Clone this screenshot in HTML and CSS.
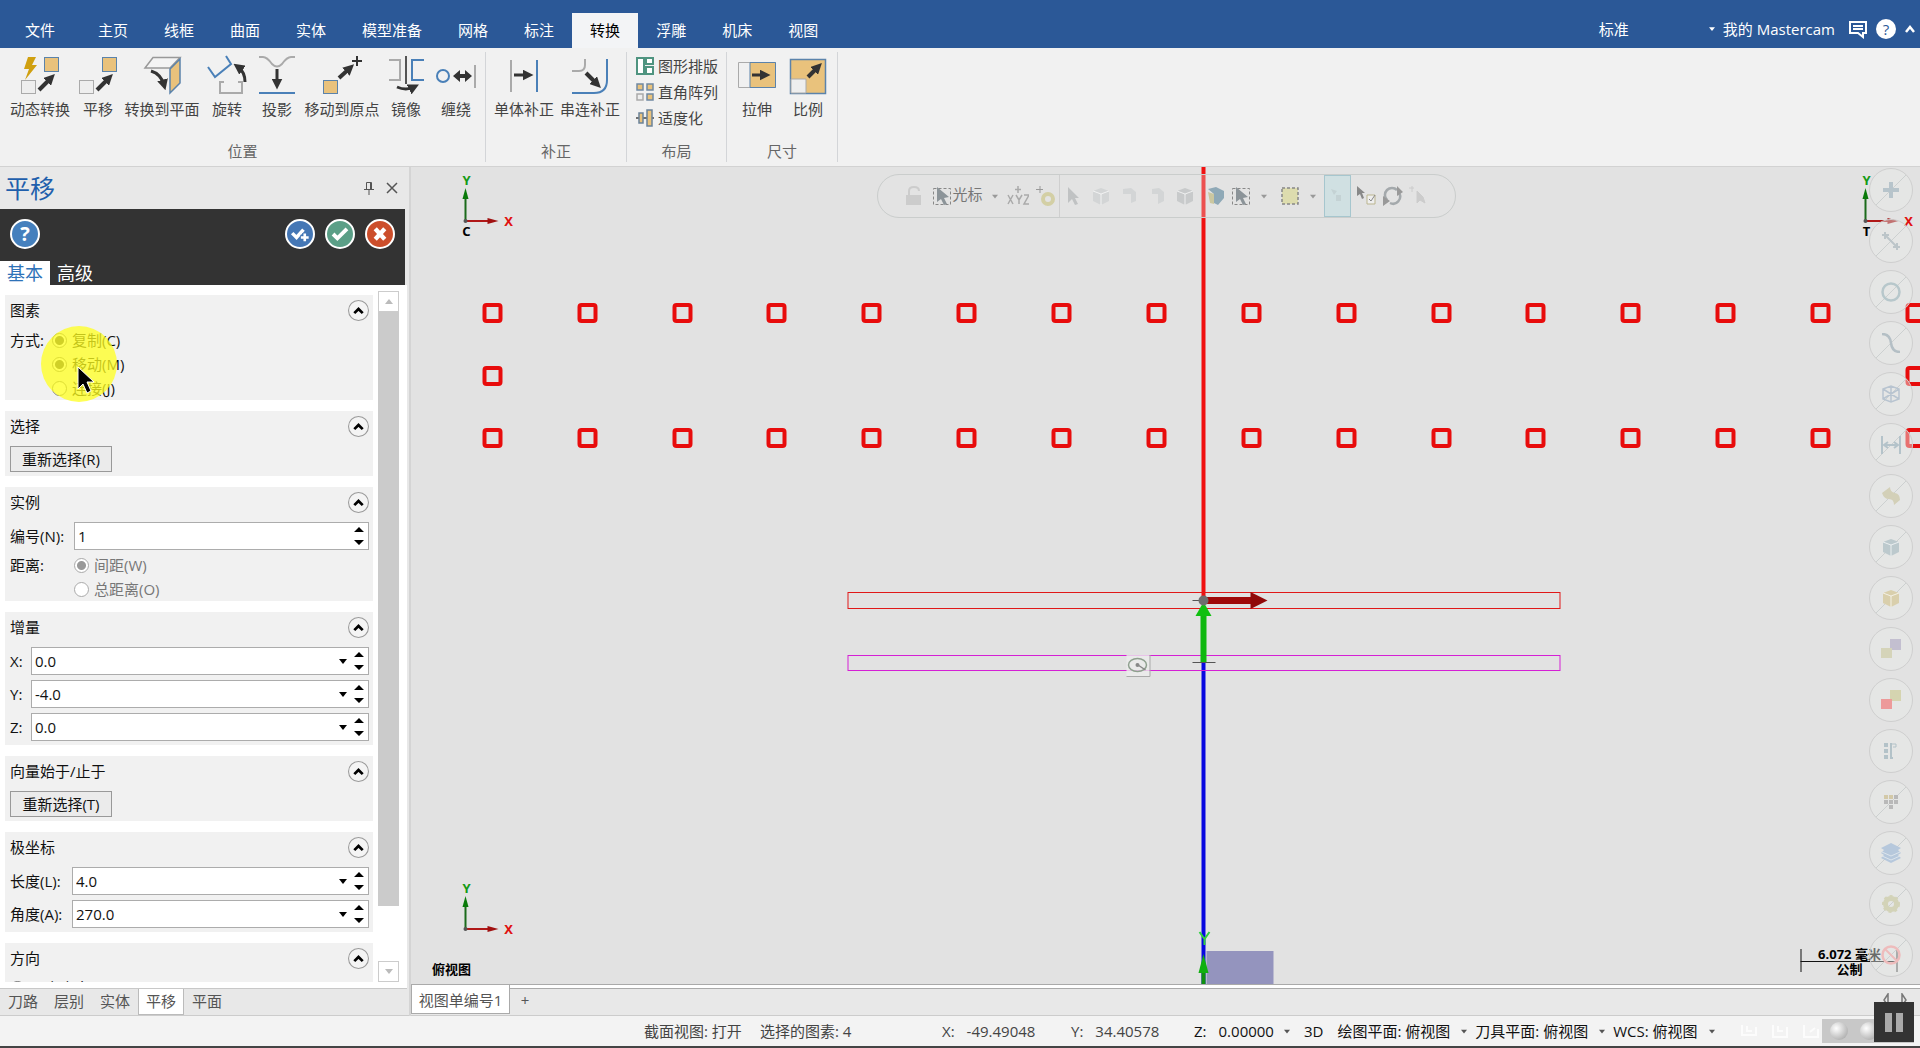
FILE: index.html
```html
<!DOCTYPE html>
<html lang="zh-CN">
<head>
<meta charset="utf-8">
<title>Mastercam</title>
<link rel="stylesheet" href="styles.css">
</head>
<body>
<svg class="defs" aria-hidden="true">
  <defs>
    <marker id="head" viewBox="0 0 10 10" refX="5" refY="5" markerWidth="11" markerHeight="11" markerUnits="userSpaceOnUse" orient="auto-start-reverse"><path d="M0 0L10 5L0 10z" fill="#333"/></marker>
    <symbol id="up" viewBox="0 0 20 20"><circle cx="10" cy="10" r="9.500" fill="#f4f4f4" stroke="#9a9a9a"/><path d="M6 12.500l4-4 4 4" fill="none" stroke="#000" stroke-width="2.600"/></symbol>
    <symbol id="spin" viewBox="0 0 10 18"><path d="M0 5L5 0L10 5zM0 13L5 18L10 13z"/></symbol>
    <symbol id="caret" viewBox="0 0 8 5"><path d="M0 0H8L4 5z"/></symbol>
    <symbol id="pick" viewBox="0 0 20 20"><rect x="1.500" y="2.500" width="17" height="16" fill="none" stroke="#888" stroke-dasharray="3 2"/><path d="M5 1v15l4-3 3 6 3-1-3-6 5-1z" fill="#8c9499"/></symbol>
    <symbol id="cube" viewBox="0 0 20 20"><path d="M2 5l8-3 8 3v10l-8 4-8-4z"/><path d="M2 5l8 3 8-3M10 8v11" fill="none" stroke="#fff" stroke-opacity=".7"/></symbol>
  </defs>
</svg>

<div class="app">
  <header class="titlebar">
    <nav class="tabs">
      <button class="tab file">文件</button><button class="tab">主页</button><button class="tab">线框</button><button class="tab">曲面</button><button class="tab">实体</button><button class="tab">模型准备</button><button class="tab">网格</button><button class="tab">标注</button><button class="tab active">转换</button><button class="tab">浮雕</button><button class="tab">机床</button><button class="tab">视图</button>
    </nav>
    <div class="account">
      <button class="plain std">标准</button>
      <svg class="caret" width="6" height="4"><use href="#caret"/></svg>
      <button class="plain mine">我的 Mastercam</button>
      <svg width="20" height="20" viewBox="0 0 20 20" fill="none" stroke="#fff" stroke-width="2"><path d="M2 3h16v11h-3v4l-5-4H2z"/><path d="M5 7h10M5 10h10"/></svg>
      <button class="help" aria-label="帮助">?</button>
      <svg width="10" height="8" viewBox="0 0 10 8" fill="none" stroke="#fff" stroke-width="2.500"><path d="M1 7l4-5 4 5"/></svg>
    </div>
  </header>

  <section class="ribbon">
    <div class="group">
      <div class="tools position">
        <button class="tool"><svg viewBox="0 0 40 40"><path d="M8 2h8l-4 8h5L5 25l4-11H4z" fill="#d0a010"/><rect x="24.500" y="2.500" width="14" height="14" fill="#e9c27c" stroke="#5b83ab"/><rect x="1.500" y="25.500" width="14" height="13" fill="#eee" stroke="#aaa"/><path d="M19 35L31 23" stroke="#333" stroke-width="4" marker-end="url(#head)"/></svg>动态转换</button>
        <button class="tool"><svg viewBox="0 0 40 40"><rect x="24.500" y="2.500" width="14" height="14" fill="#e9c27c" stroke="#5b83ab"/><rect x="1.500" y="25.500" width="14" height="13" fill="#eee" stroke="#aaa"/><path d="M19 35L31 23" stroke="#333" stroke-width="4" marker-end="url(#head)"/></svg>平移</button>
        <button class="tool"><svg viewBox="0 0 40 40"><path d="M3 13L11 2.500H38L28 13z" fill="#f4f4f4" stroke="#999" stroke-width="1.500"/><path d="M28 14L38 4V28L28 38z" fill="#e9c27c" stroke="#5b83ab" stroke-width="1.500"/><path d="M9 16q10 3 13 14" fill="none" stroke="#333" stroke-width="3" marker-end="url(#head)"/></svg>转换到平面</button>
        <button class="tool"><svg viewBox="0 0 40 40" fill="none" stroke-width="2"><path d="M1 12L8 22L24 9L19 1" stroke="#4a80b8"/><path d="M17 27H13V38H35V27H31" stroke="#aaa"/><path d="M38 27Q38 17 31 12" stroke="#333" stroke-width="3" marker-end="url(#head)"/></svg>旋转</button>
        <button class="tool"><svg viewBox="0 0 40 40" fill="none" stroke-width="2"><path d="M2 2h4q4 0 9 7q5 5 10 0q5-7 9-7h4" stroke="#aaa"/><path d="M20 14V29" stroke="#333" stroke-width="3" marker-end="url(#head)"/><path d="M2 38H38" stroke="#4a80b8"/></svg>投影</button>
        <button class="tool"><svg viewBox="0 0 40 40"><rect x="1.500" y="25.500" width="14" height="13" fill="#e9c27c" stroke="#5b83ab"/><path d="M17 23L28 13" stroke="#333" stroke-width="4" marker-end="url(#head)"/><path d="M35 1V11M30 6H40" stroke="#333" stroke-width="2"/></svg>移动到原点</button>
        <button class="tool"><svg viewBox="0 0 40 40" fill="none" stroke-width="2"><path d="M3 5H14V25H3" stroke="#aaa"/><path d="M20 1V29" stroke="#555"/><path d="M38 5H26V25H38" stroke="#4a80b8"/><path d="M11 32q9 4 17 0" stroke="#333" stroke-width="3" marker-end="url(#head)"/></svg>镜像</button>
        <button class="tool"><svg viewBox="0 0 40 40" fill="none" stroke-width="2"><circle cx="7" cy="21" r="6" stroke="#4a80b8"/><path d="M17 21l7-6v4h5v-4l7 6-7 6v-4h-5v4z" fill="#333" stroke="none"/><path d="M39 10V33" stroke="#aaa"/></svg>缠绕</button>
      </div>
      <div class="caption">位置</div>
    </div>
    <div class="group">
      <div class="tools offset">
        <button class="tool"><svg viewBox="0 0 40 40" fill="none" stroke-width="2"><path d="M7 5V37" stroke="#aaa"/><path d="M10 20H24" stroke="#333" stroke-width="3" marker-end="url(#head)"/><path d="M33 5V37" stroke="#4a80b8"/></svg>单体补正</button>
        <button class="tool"><svg viewBox="0 0 40 40" fill="none" stroke-width="2"><path d="M15 4V10Q15 16 9 16H2" stroke="#aaa"/><path d="M16 18L27 29" stroke="#333" stroke-width="4" marker-end="url(#head)"/><path d="M37 4V25Q37 38 24 38H2" stroke="#4a80b8"/></svg>串连补正</button>
      </div>
      <div class="caption">补正</div>
    </div>
    <div class="group">
      <div class="tools stack">
        <button class="mini"><svg viewBox="0 0 18 18" fill="#fff" stroke="#4f9480" stroke-width="2"><path d="M1 1H8V17H1zM10 1H17V7H10zM10 10H17V17H10z"/></svg>图形排版</button>
        <button class="mini"><svg viewBox="0 0 18 18" fill="#e9c27c" stroke="#7089a3" stroke-width="1.500"><path d="M1 1h6v6H1zM11 1h6v6h-6zM11 11h6v6h-6z"/><path fill="#eee" stroke="#aaa" d="M1 11h6v6H1z"/></svg>直角阵列</button>
        <button class="mini"><svg viewBox="0 0 18 18" fill="#e9c27c" stroke="#6b8299" stroke-width="1.500"><path d="M0 9H18" stroke="#444"/><path d="M3 4h4v10H3zM11 1h5v16h-5z"/></svg>适度化</button>
      </div>
      <div class="caption">布局</div>
    </div>
    <div class="group">
      <div class="tools size">
        <button class="tool"><svg viewBox="0 0 40 40"><path d="M1.500 7.500h37v25h-37z" fill="#f0f0f0" stroke="#aaa"/><path d="M13 7.500h25.500v25H13z" fill="#e9c27c" stroke="#5b83ab"/><path d="M15 20H28" stroke="#333" stroke-width="3" marker-end="url(#head)"/></svg>拉伸</button>
        <button class="tool"><svg viewBox="0 0 40 40"><path d="M2.500 4.500h35v34h-35z" fill="#e9c27c" stroke="#5b83ab" stroke-width="1.500"/><path d="M3 24h15v14H3z" fill="#eee" stroke="#aaa"/><path d="M20 22L30 12" stroke="#333" stroke-width="4" marker-end="url(#head)"/></svg>比例</button>
      </div>
      <div class="caption">尺寸</div>
    </div>
  </section>

  <main class="work">
    <aside class="panel">
      <div class="panel-title"><h1>平移</h1>
        <svg width="10" height="14" viewBox="0 0 10 14" fill="none" stroke="#555"><path d="M2.500 8V1.500H7.500V8M6.500 2V8M0 8.500H10M5 9V14"/></svg>
        <svg width="12" height="12" viewBox="0 0 12 12" stroke="#555" stroke-width="1.500"><path d="M1 1L11 11M11 1L1 11"/></svg>
      </div>
      <div class="actions">
        <button class="round blue" aria-label="帮助">?</button>
        <button class="round navy" aria-label="确定并继续"><svg viewBox="0 0 30 30" fill="none" stroke="#fff" stroke-width="4"><path d="M6 14l5 5 8-9"/><path d="M20.500 14v10M15.500 19h10" stroke="#4577b5" stroke-width="6"/><path d="M20.500 14.500v9M16 19h9" stroke-width="3"/></svg></button>
        <button class="round green" aria-label="确定"><svg viewBox="0 0 30 30" fill="none" stroke="#fff" stroke-width="4.500"><path d="M7 15l5 5 11-11"/></svg></button>
        <button class="round red" aria-label="取消"><svg viewBox="0 0 30 30" fill="none" stroke="#fff" stroke-width="5"><path d="M9.500 9l11 12M20.500 9l-11 12"/></svg></button>
      </div>
      <div class="panel-tabs"><button class="ptab active">基本</button><button class="ptab">高级</button></div>
      <div class="panel-body">
        <div class="sections">
          <section class="sec">
            <div class="sec-head"><h2>图素</h2><svg><use href="#up"/></svg></div>
            <div class="choice mode"><span>方式:</span>
              <div><label><input type="radio" name="m0" checked>复制(C)</label><label><input type="radio" name="m1" checked>移动(M)</label><label><input type="radio" name="m1">连接(J)</label></div>
            </div>
            <div class="spot"></div>
            <svg class="pointer" viewBox="0 0 18 28"><path d="M1 1V23L6 18L10 27L14 25L10 16H17z" fill="#000" stroke="#fff"/></svg>
          </section>
          <section class="sec">
            <div class="sec-head"><h2>选择</h2><svg><use href="#up"/></svg></div>
            <button class="btn">重新选择(R)</button>
          </section>
          <section class="sec">
            <div class="sec-head"><h2>实例</h2><svg><use href="#up"/></svg></div>
            <div class="row"><label class="w64" for="n">编号(N):</label><div class="field"><input id="n" value="1"><svg class="spin"><use href="#spin"/></svg></div></div>
            <div class="choice dist"><span class="w64">距离:</span>
              <div><label><input type="radio" name="d" checked disabled>间距(W)</label><label><input type="radio" name="d" disabled>总距离(O)</label></div>
            </div>
          </section>
          <section class="sec">
            <div class="sec-head"><h2>增量</h2><svg><use href="#up"/></svg></div>
            <div class="row"><label class="w21" for="x">X:</label><div class="field"><input id="x" value="0.0"><svg class="drop"><use href="#caret"/></svg><svg class="spin"><use href="#spin"/></svg></div></div>
            <div class="row"><label class="w21" for="y">Y:</label><div class="field"><input id="y" value="-4.0"><svg class="drop"><use href="#caret"/></svg><svg class="spin"><use href="#spin"/></svg></div></div>
            <div class="row"><label class="w21" for="z">Z:</label><div class="field"><input id="z" value="0.0"><svg class="drop"><use href="#caret"/></svg><svg class="spin"><use href="#spin"/></svg></div></div>
          </section>
          <section class="sec">
            <div class="sec-head"><h2>向量始于/止于</h2><svg><use href="#up"/></svg></div>
            <button class="btn">重新选择(T)</button>
          </section>
          <section class="sec">
            <div class="sec-head"><h2>极坐标</h2><svg><use href="#up"/></svg></div>
            <div class="row"><label class="w62" for="l">长度(L):</label><div class="field"><input id="l" value="4.0"><svg class="drop"><use href="#caret"/></svg><svg class="spin"><use href="#spin"/></svg></div></div>
            <div class="row"><label class="w62" for="a">角度(A):</label><div class="field"><input id="a" value="270.0"><svg class="drop"><use href="#caret"/></svg><svg class="spin"><use href="#spin"/></svg></div></div>
          </section>
          <section class="sec">
            <div class="sec-head"><h2>方向</h2><svg><use href="#up"/></svg></div>
            <div class="choice"><label><input type="radio" name="dir" checked>已定方向(D)</label></div>
          </section>
        </div>
        <div class="scroll"><span class="arrow"><svg width="8" height="5" viewBox="0 0 8 5"><path d="M0 5H8L4 0z"/></svg></span><span class="thumb"></span><span class="arrow"><svg width="8" height="5"><use href="#caret"/></svg></span></div>
      </div>
      <nav class="managers"><button>刀路</button><button>层别</button><button>实体</button><button class="active">平移</button><button>平面</button></nav>
    </aside>

    <div class="view">
      <div class="canvas">
        <svg class="scene" viewBox="410 167 1510 817" preserveAspectRatio="xMidYMid slice">
          <defs>
            <rect id="sq" x="-8" y="-8" width="16" height="16" rx="2" fill="none" stroke="#e80c0c" stroke-width="4"/>
            <g id="rowsq"><use href="#sq" x="492"/><use href="#sq" x="587"/><use href="#sq" x="682"/><use href="#sq" x="776"/><use href="#sq" x="871"/><use href="#sq" x="966"/><use href="#sq" x="1061"/><use href="#sq" x="1156"/><use href="#sq" x="1251"/><use href="#sq" x="1346"/><use href="#sq" x="1441"/><use href="#sq" x="1535"/><use href="#sq" x="1630"/><use href="#sq" x="1725"/><use href="#sq" x="1820"/><use href="#sq" x="1915"/></g>
            <g id="axes"><path d="M0 0V-24" stroke="#1b6b1b" stroke-width="2"/><path d="M-3-22L0-33L3-22z" fill="#0a7a0a"/><path d="M0 0H24" stroke="#b01818" stroke-width="2"/><path d="M22-3L33 0L22 3z" fill="#a01010"/><circle r="2" fill="#555"/><text x="1" y="-36" fill="#149a14">Y</text><text x="43" y="5" fill="#e01010">X</text></g>
          </defs>
          <g class="axis-text"><use href="#axes" x="465" y="221"/><use href="#axes" x="465" y="929"/><use href="#axes" x="1865" y="221"/>
            <text x="466" y="236">C</text><text x="1866" y="236">T</text></g>
          <use href="#rowsq" y="313"/><use href="#rowsq" y="438"/><use href="#sq" x="492" y="376"/><use href="#sq" x="1915" y="376"/>
          <rect x="1206" y="951" width="67" height="33" fill="#9494be"/>
          <path d="M1203 167V600" stroke="#f01010" stroke-width="4"/>
          <path d="M1203 662V984" stroke="#0808e0" stroke-width="4"/>
          <rect x="847.500" y="592.500" width="712" height="16" fill="none" stroke="#e01818"/>
          <rect x="847.500" y="655.500" width="712" height="15" fill="none" stroke="#d520d5"/>
          <path d="M1203 662V614" stroke="#10b810" stroke-width="6"/><path d="M1195 616L1203 602L1211 616z" fill="#10c010"/>
          <path d="M1206 600.500H1252" stroke="#a00808" stroke-width="7"/><path d="M1250 592L1267 600.500L1250 609z" fill="#900808"/>
          <path d="M1192 600.500H1200M1192 662.500H1215" stroke="#555"/><circle cx="1203" cy="600.500" r="5" fill="#6e6e6e"/>
          <path d="M1203 984V970" stroke="#109010" stroke-width="4"/><path d="M1198 973L1203 954L1208 973z" fill="#10b010"/><path d="M1199 932L1204 939L1209 932M1204 939V945" stroke="#30d040" stroke-width="2" fill="none"/>
          <rect x="1126" y="655" width="23" height="21" fill="#ececec" fill-opacity=".8"/><path d="M1126 676.500H1149.500V655" fill="none" stroke="#aaa"/><ellipse cx="1137" cy="665" rx="9" ry="6.500" fill="none" stroke="#8fa08f" stroke-width="1.500"/><path d="M1136 664l9 6" stroke="#888" stroke-width="1.500"/><circle cx="1137" cy="665" r="2" fill="#888"/>
          <path d="M1800.500 949V972M1896.500 949V972M1800 961.500H1897" stroke="#111"/>
          <g class="scale-text"><text x="1849" y="959">6.072 毫米</text><text x="1849" y="974">公制</text><text x="451" y="974">俯视图</text></g>
        </svg>

        <div class="pill">
          <svg class="i-lock" viewBox="0 0 20 20"><path d="M5 9V5q0-4 5-4t5 4" fill="none" stroke="#ccc" stroke-width="2"/><rect x="2" y="9" width="15" height="10" fill="#ccc"/></svg>
          <button class="cursor"><svg viewBox="0 0 20 20"><use href="#pick"/></svg><span>光标</span><svg class="dd"><use href="#caret"/></svg></button>
          <button class="xyz" aria-label="XYZ 坐标"><svg viewBox="0 0 22 20"><path d="M11 0V7M8 3.500H14M1 9l5 9M6 9l-5 9M9 9l3 5 3-5M12 14v4M17 9h5l-5 9h5" fill="none" stroke="#aaa" stroke-width="1.500"/></svg></button>
          <svg viewBox="0 0 20 20"><path d="M4 0V7M0 3.500H7" stroke="#999"/><circle cx="12" cy="13" r="5" fill="none" stroke="#d3cfa5" stroke-width="4"/></svg>
          <i class="rule"></i>
          <svg class="lead" viewBox="0 0 20 20"><path d="M5 1v16l4-4 3 6 3-1-3-6h4z" fill="#c0c2c3"/></svg>
          <svg viewBox="0 0 20 20" class="dim"><use href="#cube"/></svg><svg viewBox="0 0 20 20" class="dim"><path d="M4 3l8-1 5 4v9l-5 2V8H4z"/></svg><svg viewBox="0 0 20 20" class="dim"><path d="M5 3l7-1 5 4v9l-6 3V8H5z"/></svg><svg viewBox="0 0 20 20" class="dim more"><use href="#cube"/></svg>
          <svg viewBox="0 0 20 20" class="solid"><path d="M2 3l8-2 8 4v7l-6 7-4-2V8z" fill="#8fa9b7"/><path d="M2 6l6 2v10l-4-1z" fill="#cbc7a0"/></svg>
          <button class="sel" aria-label="选择方式"><svg viewBox="0 0 20 20"><use href="#pick"/></svg><svg class="dd"><use href="#caret"/></svg></button>
          <button class="sel" aria-label="窗选"><svg viewBox="0 0 20 20"><rect x="2" y="2" width="16" height="16" fill="#dddcae" stroke="#888" stroke-width="1.500" stroke-dasharray="3 2"/></svg><svg class="dd"><use href="#caret"/></svg></button>
          <span class="lit"><svg viewBox="0 0 20 20"><path d="M4 3l6 2-3 4zM9 9h5v6H9z" fill="#c4d2d4"/></svg></span>
          <svg viewBox="0 0 20 20" class="tail"><path d="M0 0v10l3-2 2 5 2-1-2-5h3z" fill="#888"/><path d="M10 9h8v9h-8z" fill="#eee" stroke="#bbb58f"/><path d="M12 13l2 2 4-6" fill="none" stroke="#888"/></svg>
          <svg viewBox="0 0 20 20" class="tail"><path d="M4 14A7 7 0 0 1 14 4M16 7A7 7 0 0 1 7 17" fill="none" stroke="#a4a9ac" stroke-width="2.500"/><path d="M0 10v10l7-5zM14 0v10l6-4z" fill="#999"/></svg>
          <svg viewBox="0 0 20 20" class="tail"><path d="M0 2h5M3 0v6M8 5v12l3-3 5 3-2-6z" fill="#ccc" stroke="#ccc"/></svg>
        </div>

        <div class="quick">
          <button class="q slash" aria-label="点"><svg viewBox="0 0 20 20"><path d="M10 2V18M2 10H18" stroke="#b7c4cb" stroke-width="4"/></svg></button>
          <button class="q slash" aria-label="线"><svg viewBox="0 0 20 20"><path d="M4 4L16 16M4 1V8M1 4H8M16 12V19M12 16H19" stroke="#bcc5c9" stroke-width="2"/></svg></button>
          <button class="q slash" aria-label="圆弧"><svg viewBox="0 0 20 20"><circle cx="10" cy="10" r="8.500" fill="none" stroke="#b7c7cb" stroke-width="2.500"/></svg></button>
          <button class="q slash" aria-label="曲线"><svg viewBox="0 0 20 20"><path d="M1 1q8 0 9 9t9 9" fill="none" stroke="#b4bfc5" stroke-width="2.500"/></svg></button>
          <button class="q slash" aria-label="线框"><svg viewBox="0 0 20 20"><path d="M2 5l8-3 8 3v10l-8 3-8-3zM2 5l16 10M18 5L2 15M10 2v16" fill="none" stroke="#b8c4d0" stroke-width="1.500"/></svg></button>
          <button class="q slash" aria-label="标注"><svg viewBox="0 0 20 20"><path d="M1 1V19M19 1V19M3 10H17M7 7l-4 3 4 3M13 7l4 3-4 3" fill="none" stroke="#b4c3ca" stroke-width="2"/></svg></button>
          <button class="q slash" aria-label="曲面"><svg viewBox="0 0 20 20"><path d="M1 7l8-6q0 5 5 6t5 7l-6 5q0-6-5-6t-7-6z" fill="#d3d0b8"/></svg></button>
          <button class="q slash" aria-label="网格"><svg viewBox="0 0 20 20" fill="#bcc9cd"><use href="#cube"/></svg></button>
          <button class="q slash" aria-label="实体"><svg viewBox="0 0 20 20" fill="#d9cfac"><use href="#cube"/></svg></button>
          <button class="q" aria-label="群组"><svg viewBox="0 0 20 20"><path d="M9 0h11v11H9z" fill="#c3bfd0"/><path d="M0 9h11v10H0z" fill="#d5d4b9"/></svg></button>
          <button class="q" aria-label="结果"><svg viewBox="0 0 20 20"><path d="M9 0h11v11H9z" fill="#d5d4b0"/><path d="M0 9h11v10H0z" fill="#ed9a9a"/></svg></button>
          <button class="q" aria-label="命名"><svg viewBox="0 0 20 20"><path d="M3 2h4v4H3zM3 8h4v4H3zM3 14h4v4H3zM9 2h2v14h1v2H9z" fill="#b3c2c8"/><path d="M11 3h4v3h-3" fill="none" stroke="#b3c2c8"/></svg></button>
          <button class="q slash" aria-label="颜色"><svg viewBox="0 0 20 20"><path d="M3 3h4v4H3zM8 3h4v4H8z" fill="#d3c9a8"/><path d="M13 3h4v4h-4zM3 8h4v4H3zM8 8h4v4H8zM13 8h4v4h-4zM8 13h4v4H8z" fill="#b9b9b9"/></svg></button>
          <button class="q slash" aria-label="层别"><svg viewBox="0 0 20 20"><path d="M0 5l10-5 10 5-3 2 3 3-3 2 3 3-10 5-10-5 3-3-3-2 3-3z" fill="#b6c8dc"/><path d="M1 9l9 4 9-4M1 13l9 4 9-4" fill="none" stroke="#dde5ec"/></svg></button>
          <button class="q slash" aria-label="设置"><svg viewBox="0 0 20 20"><circle cx="10" cy="10" r="5.500" fill="none" stroke="#d3d3b8" stroke-width="5"/><circle cx="10" cy="10" r="8" fill="none" stroke="#d3d3b8" stroke-width="2" stroke-dasharray="3 3"/></svg></button>
          <button class="q slash" aria-label="清除"><svg viewBox="0 0 20 20"><circle cx="10" cy="10" r="8.500" fill="none" stroke="#eebcbc" stroke-width="2.500"/><path d="M4 4L16 16" stroke="#eebcbc" stroke-width="2"/></svg></button>
        </div>
      </div>
      <div class="sheets"><button class="sheet">视图单编号1</button><button class="add">+</button>
        <svg class="nav" width="24" height="14" viewBox="0 0 24 14" fill="none" stroke="#777" stroke-width="1.500"><path d="M5 1L1 7L5 13zM19 1L23 7L19 13z"/></svg></div>
    </div>
  </main>

  <footer class="status">
    <span class="soft cut">截面视图: 打开</span><span class="soft picked">选择的图素: 4</span>
    <span class="soft coord cx">X:<b>-49.49048</b></span><span class="soft coord cy">Y:<b>34.40578</b></span><span class="coord cz">Z:<b>0.00000</b></span>
    <svg class="sc"><use href="#caret"/></svg><span class="dim3">3D</span>
    <span class="plane">绘图平面: 俯视图</span><svg class="sc"><use href="#caret"/></svg>
    <span class="plane">刀具平面: 俯视图</span><svg class="sc"><use href="#caret"/></svg>
    <span class="wcs">WCS: 俯视图</span><svg class="sc"><use href="#caret"/></svg>
    <div class="shade">
      <svg viewBox="0 0 80 20" class="ghost" fill="none" stroke="#fff" stroke-width="2"><path d="M2 4v10h14V6M7 5v5h5M33 4v12h14V6M38 5v5h5M64 4v12h14V8M70 11l5-4"/></svg>
      <span class="balls"><i></i><i></i></span>
    </div>
    <button class="pause" aria-label="暂停"><i></i><i></i></button>
  </footer>
</div>
</body>
</html>
```
FILE: styles.css
```css
* { box-sizing: border-box; }
body { margin: 0; font: 15px/20px "Open Sans", "Noto Sans CJK SC", sans-serif; color: #111; }
button, input { font: inherit; color: inherit; border: 0; padding: 0; background: none; white-space: nowrap; }
svg { display: block; flex: none; }
h1, h2 { margin: 0; font-weight: 400; font-size: 15px; }
.defs { position: absolute; width: 0; height: 0; }
.app { height: 100vh; min-height: 700px; display: flex; flex-direction: column; overflow: hidden; background: #f1f1f1; }

/* Title bar */
.titlebar { flex: none; height: 48px; display: flex; justify-content: space-between; align-items: flex-end; background: #2b5897; color: #fff; }
.tabs { display: flex; }
.tab { height: 35px; padding: 0 18px 2px; }
.tab.file { width: 80px; }
.tab.active { background: #f3f4f6; color: #000; }
.account { display: flex; align-items: center; height: 38px; padding-right: 5px; }
.std { margin-right: 80px; }
.caret { fill: #fff; margin-right: 8px; }
.mine { margin-right: 13px; }
.help { width: 20px; height: 20px; margin: 0 9px 0 8px; border-radius: 50%; background: #fff; color: #2b5897; }

/* Ribbon */
.ribbon { flex: none; height: 119px; display: flex; padding: 4px 0; border-bottom: 1px solid #d2d2d2; color: #444; }
.group { display: flex; flex-direction: column; justify-content: space-between; border-right: 1px solid #d3d5d8; }
.tools { display: grid; padding: 3px 4px 0; }
.position { grid-template-columns: 72px 44px 84px 46px 54px 76px 52px 48px; padding-right: 5px; }
.offset { grid-template-columns: 68px 64px; }
.size { grid-template-columns: 52px 50px; }
.tool { display: flex; flex-direction: column; align-items: center; gap: 4px; }
.tool svg { width: 40px; height: 40px; }
.stack { gap: 6px; padding: 4px 8px 0 9px; }
.mini { display: flex; align-items: center; gap: 4px; }
.mini svg { width: 18px; height: 18px; }
.caption { text-align: center; color: #666; padding-bottom: 1px; }

/* Work area */
.work { flex: 1; min-height: 0; display: flex; }
.panel { flex: none; width: 411px; display: flex; flex-direction: column; border-right: 2px solid #d4d4d4; background: #e8e8e8; }
.panel-title { height: 42px; display: flex; align-items: center; padding: 0 11px 0 5px; gap: 12px; }
.panel-title h1 { flex: 1; font-size: 25px; line-height: 32px; color: #1f5fac; }
.actions { height: 52px; margin-right: 4px; padding: 0 10px 2px; display: flex; align-items: center; gap: 10px; background: #333; }
.round { width: 30px; height: 30px; border-radius: 50%; border: 2px solid #fff; color: #fff; font-weight: 700; font-size: 20px; }
.round:first-child { margin-right: auto; }
.round svg { width: 26px; height: 26px; }
.blue { background: #4580bd; } .navy { background: #4577b5; } .green { background: #5b9f87; } .red { background: #cc4e2b; }
.panel-tabs { height: 24px; margin-right: 4px; display: flex; background: #333; color: #fff; font-size: 18px; line-height: 24px; }
.ptab { padding: 0 7px; }
.ptab.active { background: #fff; color: #2e72b8; }
.panel-body { flex: 1; min-height: 0; display: flex; gap: 5px; padding: 6px 8px 6px 5px; margin-right: 2px; background: #fff; border-bottom: 1px solid #c8c8c8; }
.sections { flex: 1; overflow: hidden; padding-top: 4px; display: flex; flex-direction: column; gap: 11px; }
.sec { flex: none; position: relative; padding: 5px 4px 4px 5px; background: #f1f1f1; display: flex; flex-direction: column; gap: 5px; }
.sec:has(.choice) { padding-bottom: 2px; }
.sec-head { height: 25px; display: flex; justify-content: space-between; }
.sec-head svg { width: 21px; height: 21px; }
.btn { align-self: flex-start; width: 102px; height: 26px; border: 1px solid #999; background: #ebebeb; }
.row { display: flex; align-items: center; }
.w21 { width: 21px; } .w62 { width: 62px; } .w64 { width: 64px; }
.field { flex: 1; height: 28px; display: flex; align-items: center; padding: 0 4px 0 3px; border: 1px solid #acacac; background: #fff; }
.field input { flex: 1; min-width: 0; outline: 0; }
.spin { width: 10px; height: 18px; }
.drop { width: 8px; height: 5px; margin-right: 7px; }
.choice { display: flex; }
.choice div { display: grid; gap: 4px; }
.choice label { display: flex; align-items: center; gap: 5px; }
.choice input { appearance: none; width: 15px; height: 15px; margin: 0; border: 1px solid #777; border-radius: 50%; background: #fff; }
.choice input:checked { background: radial-gradient(circle, #444 0 4px, #fff 5px); }
.choice input:disabled { border-color: #aaa; }
.choice input:disabled:checked { background: radial-gradient(circle, #999 0 4px, #fff 5px); }
.mode span { width: 42px; white-space: nowrap; }
.dist div { color: #777; }
.spot { position: absolute; left: 36px; top: 31px; width: 76px; height: 76px; border-radius: 50%; background: #ffff1e; opacity: .75; }
.pointer { position: absolute; left: 72px; top: 71px; width: 18px; height: 28px; }
.scroll { width: 21px; display: flex; flex-direction: column; background: #fff; }
.scroll .arrow { height: 21px; display: grid; place-items: center; border: 1px solid #ccc; fill: #bbb; background: #fff; }
.scroll .arrow:last-child { margin-top: auto; }
.thumb { height: 86%; background: #cbcbcb; }
.managers { height: 27px; display: flex; color: #555; border-bottom: 1px solid #ccc; }
.managers button { padding: 0 8px 2px; }
.managers .active { padding: 0 7px 2px; background: #fff; border: 1px solid #bbb; border-top: 0; }

/* Graphics view */
.view { flex: 1; min-width: 0; display: flex; flex-direction: column; }
.canvas { flex: 1; min-height: 0; position: relative; background: #e2e2e2; overflow: hidden; }
.scene { position: absolute; width: 100%; height: 100%; }
.axis-text { font: 700 13px "Noto Sans", sans-serif; text-anchor: middle; }
.scale-text { font: 700 13px "Noto Sans", "Noto Sans CJK SC", sans-serif; text-anchor: middle; }
.pill { position: absolute; left: calc(50% - 289px); top: 7px; width: 579px; height: 44px; padding: 0 26px; display: flex; align-items: center; border: 1px solid #cacdcc; border-radius: 22px; background: rgba(228, 229, 228, .3); }
.pill > * { flex: none; }
.pill svg { width: 20px; height: 20px; }
.pill .dd { width: 6px; height: 5px; fill: #999; margin: 0 0 0 8px; }
.cursor, .sel { display: flex; align-items: center; color: #777; }
.cursor { margin: 0 9px 0 8px; gap: 1px; }
.cursor span { padding-bottom: 4px; }
.xyz { margin-right: 7px; }
.xyz svg { width: 22px; }
.rule { width: 1px; height: 42px; margin: 0 3px; background: #cfcfcf; }
.pill .dim { fill: #d3d5d6; margin-left: 8px; }
.pill .more { fill: #c8cacb; }
.pill .solid { margin: 0 5px 0 11px; }
.pill .sel { margin-right: 13px; }
.pill .sel .dd { margin-left: 10px; }
.pill .lit { width: 27px; height: 42px; display: grid; place-items: center; border: 1px solid #a6c6ce; background: #d0e0e2; margin-left: -5px; }
.pill .tail { margin-left: 6px; }
.quick { position: absolute; right: 7px; top: 1px; display: grid; gap: 7px; }
.q { width: 44px; height: 44px; display: grid; place-items: center; border: 1px solid #cfcfcf; border-radius: 50%; background: rgba(232, 234, 233, .45); }
.q svg { width: 20px; height: 20px; }
.q.slash { background: linear-gradient(135deg, transparent 49%, #ccd0d0 50%, transparent 51%), rgba(232, 234, 233, .45); }
.sheets { flex: none; height: 32px; display: flex; align-items: stretch; border-top: 1px solid #aaa; border-bottom: 1px solid #ccc; background: linear-gradient(#fff 3px, #aaa 3px, #aaa 4px, #e8e8e8 4px); color: #555; }
.sheet { width: 99px; padding-top: 2px; background: #fff; border: 1px solid #aaa; border-top: 0; margin-bottom: 1px; }
.add { width: 30px; }
.nav { margin: 8px 13px 0 auto; }

/* Status bar */
.status { flex: none; position: relative; height: 32px; display: flex; align-items: center; padding-left: 644px; border-bottom: 2px solid #444; background: #f3f3f3; color: #111; white-space: nowrap; }
.soft { color: #444; }
.cut { width: 116px; } .picked { width: 182px; }
.coord { display: flex; }
.coord b { font-weight: 400; }
.coord b::before { content: ""; display: inline-block; width: 12px; }
.cx { width: 129px; } .cy { width: 123px; } .cz { width: 90px; }
.sc { width: 6px; height: 5px; fill: #555; }
.dim3 { margin: 0 14px; }
.plane + .sc { margin: 0 8px 0 11px; }
.wcs + .sc { margin-left: 11px; }
.shade { margin-left: auto; margin-right: 6px; display: flex; align-items: center; gap: 2px; }
.ghost { width: 80px; height: 20px; opacity: .8; }
.balls { display: flex; gap: 12px; align-items: center; width: 92px; height: 24px; padding-left: 8px; background: #c8c8c8; }
.balls i { width: 18px; height: 18px; border-radius: 50%; background: radial-gradient(circle at 35% 35%, #fff, #999); }
.pause { position: absolute; right: 6px; bottom: 4px; width: 40px; height: 40px; display: flex; justify-content: center; align-items: center; gap: 4px; background: #333; }
.pause i { width: 7px; height: 19px; background: #aaa; }
```
